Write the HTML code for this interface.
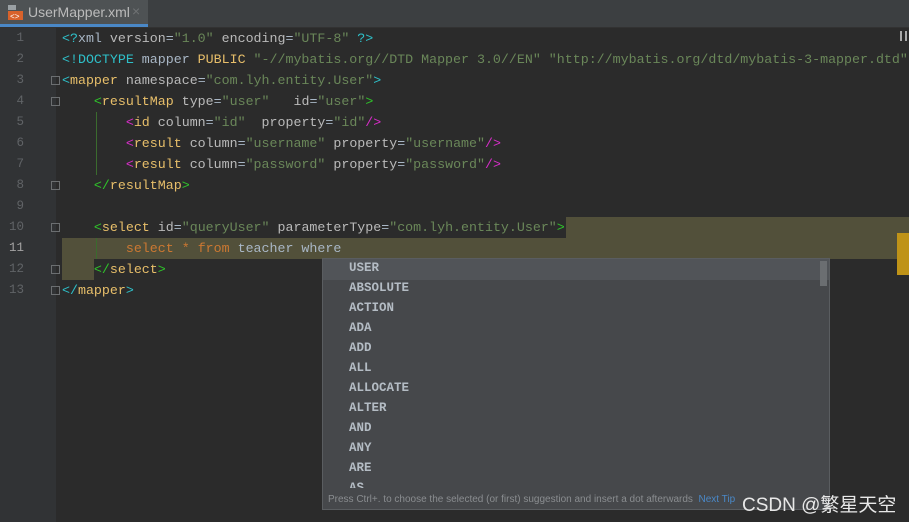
<!DOCTYPE html>
<html><head><style>
body{margin:0;width:909px;height:522px;background:#2b2b2b;overflow:hidden;position:relative;font-family:"Liberation Mono",monospace;}
.tabbar{position:absolute;left:0;top:0;width:909px;height:27px;background:#3c3f41;border-bottom:1px solid #323232;}
.tab{position:absolute;left:0;top:0;width:148px;height:24px;background:#4e5254;border-bottom:3px solid #4a88c7;}
.tab span{position:absolute;left:28px;top:4px;font:14px "Liberation Sans",sans-serif;color:#bbbbbb;}
.tab i{position:absolute;left:132px;top:3px;font-style:normal;color:#6f7274;font:14px "Liberation Sans";}
.gutter{position:absolute;left:0;top:28px;width:56px;height:494px;background:#313335;}
.ln{position:absolute;left:0;width:24px;text-align:right;font-size:12.5px;color:#606366;}
.line{position:absolute;left:62px;font-size:13.3px;white-space:pre;color:#a9b7c6;height:21px;line-height:21px;}
.c{color:#2ec0c9}.g{color:#2fc42a}.m{color:#d82dc9}.y{color:#e8bf6a}.a{color:#bababa}.v{color:#6a8759}.o{color:#cc7832}.p{color:#e8bf6a}
.fold{position:absolute;left:51px;width:9px;height:9px;border:1px solid #6b6e70;box-sizing:border-box;}
.popup{position:absolute;left:322px;top:258px;width:508px;height:252px;background:#46484b;border:1px solid #5a5d60;box-sizing:border-box;overflow:hidden;}
.it{position:absolute;left:26px;font-size:12.5px;font-weight:bold;color:#b4bcc4;}
</style></head><body>
<div class="tabbar"><div class="tab">
<svg style="position:absolute;left:8px;top:5px" width="16" height="15"><rect x="0" y="0" width="8" height="5" fill="#9aa0a4"/><rect x="0" y="6" width="15" height="9" fill="#d8622b"/><text x="2" y="14" font-size="8" fill="#fff" font-family="Liberation Mono">&lt;&gt;</text></svg>
<span>UserMapper.xml</span><i>×</i></div></div>
<svg style="position:absolute;left:900px;top:31px" width="8" height="10"><rect x="0" y="0" width="2" height="10" fill="#aaa"/><rect x="5" y="0" width="2" height="10" fill="#aaa"/></svg>
<div class="gutter"></div>
<div style="position:absolute;left:566px;top:217px;width:343px;height:21px;background:#52503a"></div>
<div style="position:absolute;left:62px;top:238px;width:847px;height:21px;background:#52503a"></div>
<div style="position:absolute;left:62px;top:259px;width:32px;height:21px;background:#52503a"></div>
<div style="position:absolute;left:897px;top:233px;width:12px;height:42px;background:#bf9318"></div>
<div style="position:absolute;left:96px;top:112px;width:1px;height:63px;background:#3b6b2e"></div>
<div style="position:absolute;left:96px;top:238px;width:1px;height:21px;background:#3b6b2e"></div>
<div class="ln" style="top:31px">1</div><div class="ln" style="top:52px">2</div><div class="ln" style="top:73px">3</div><div class="ln" style="top:94px">4</div><div class="ln" style="top:115px">5</div><div class="ln" style="top:136px">6</div><div class="ln" style="top:157px">7</div><div class="ln" style="top:178px">8</div><div class="ln" style="top:199px">9</div><div class="ln" style="top:220px">10</div><div class="ln" style="top:241px;color:#a4a3a3">11</div><div class="ln" style="top:262px">12</div><div class="ln" style="top:283px">13</div>
<div class="fold" style="top:76px"></div><div class="fold" style="top:97px"></div><div class="fold" style="top:181px"></div><div class="fold" style="top:223px"></div><div class="fold" style="top:265px"></div><div class="fold" style="top:286px"></div>
<div class="line" style="top:28px"><span class="c">&lt;?</span>xml <span class="a">version</span>=<span class="v">"1.0"</span> <span class="a">encoding</span>=<span class="v">"UTF-8"</span> <span class="c">?&gt;</span></div>
<div class="line" style="top:49px"><span class="c">&lt;!DOCTYPE</span> mapper <span class="y">PUBLIC</span> <span class="v">"-//mybatis.org//DTD Mapper 3.0//EN"</span> <span class="v">"http://mybatis.org/dtd/mybatis-3-mapper.dtd"</span></div>
<div class="line" style="top:70px"><span class="c">&lt;</span><span class="y">mapper</span> <span class="a">namespace</span>=<span class="v">"com.lyh.entity.User"</span><span class="c">&gt;</span></div>
<div class="line" style="top:91px">    <span class="g">&lt;</span><span class="y">resultMap</span> <span class="a">type</span>=<span class="v">"user"</span>   <span class="a">id</span>=<span class="v">"user"</span><span class="g">&gt;</span></div>
<div class="line" style="top:112px">        <span class="m">&lt;</span><span class="y">id</span> <span class="a">column</span>=<span class="v">"id"</span>  <span class="a">property</span>=<span class="v">"id"</span><span class="m">/&gt;</span></div>
<div class="line" style="top:133px">        <span class="m">&lt;</span><span class="y">result</span> <span class="a">column</span>=<span class="v">"username"</span> <span class="a">property</span>=<span class="v">"username"</span><span class="m">/&gt;</span></div>
<div class="line" style="top:154px">        <span class="m">&lt;</span><span class="y">result</span> <span class="a">column</span>=<span class="v">"password"</span> <span class="a">property</span>=<span class="v">"password"</span><span class="m">/&gt;</span></div>
<div class="line" style="top:175px">    <span class="g">&lt;/</span><span class="y">resultMap</span><span class="g">&gt;</span></div>
<div class="line" style="top:217px">    <span class="g">&lt;</span><span class="y">select</span> <span class="a">id</span>=<span class="v">"queryUser"</span> <span class="a">parameterType</span>=<span class="v">"com.lyh.entity.User"</span><span class="g">&gt;</span></div>
<div class="line" style="top:238px">        <span class="o">select</span> <span class="o">*</span> <span class="o">from</span> teacher where</div>
<div class="line" style="top:259px">    <span class="g">&lt;/</span><span class="y">select</span><span class="g">&gt;</span></div>
<div class="line" style="top:280px"><span class="c">&lt;/</span><span class="y">mapper</span><span class="c">&gt;</span></div>
<div style="position:absolute;left:56px;top:259px;width:1px;height:263px;"></div>
<div class="popup">
<div style="position:absolute;left:0;top:0;width:506px;height:21px;background:#515458"></div>
<div style="position:absolute;left:497px;top:2px;width:7px;height:25px;background:#6b6e71"></div>
<div class="it" style="top:2px">USER</div><div class="it" style="top:22px">ABSOLUTE</div><div class="it" style="top:42px">ACTION</div><div class="it" style="top:62px">ADA</div><div class="it" style="top:82px">ADD</div><div class="it" style="top:102px">ALL</div><div class="it" style="top:122px">ALLOCATE</div><div class="it" style="top:142px">ALTER</div><div class="it" style="top:162px">AND</div><div class="it" style="top:182px">ANY</div><div class="it" style="top:202px">ARE</div><div class="it" style="top:222px">AS</div>
<div style="position:absolute;left:0;top:229px;width:506px;height:22px;background:#46484b"></div>
<div style="position:absolute;left:5px;top:235px;font:10px 'Liberation Sans',sans-serif;color:#8a8d90;white-space:nowrap">Press Ctrl+. to choose the selected (or first) suggestion and insert a dot afterwards &nbsp;<span style="color:#4a88c7">Next Tip</span></div>
</div>
<div style="position:absolute;left:742px;top:490px;font:19px 'Liberation Sans','Noto Sans CJK SC',sans-serif;color:#e8e8e8;white-space:nowrap">CSDN @繁星天空</div>
</body></html>
